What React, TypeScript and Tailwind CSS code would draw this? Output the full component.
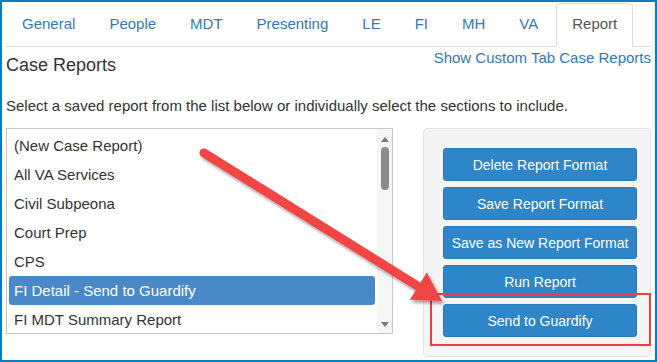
import { Fragment } from "react";

const tabs = ["General", "People", "MDT", "Presenting", "LE", "FI", "MH", "VA", "Report"];

const reports = [
  "(New Case Report)",
  "All VA Services",
  "Civil Subpeona",
  "Court Prep",
  "CPS",
  "FI Detail - Send to Guardify",
  "FI MDT Summary Report",
];

const actions = [
  "Delete Report Format",
  "Save Report Format",
  "Save as New Report Format",
  "Run Report",
  "Send to Guardify",
];

const App = () => {
  const active = "Report";
  const selected = "FI Detail - Send to Guardify";

  return (
    <div className="relative w-[657px] h-[362px] overflow-hidden border-2 border-[#0b7bc4] bg-white text-[#333] font-['Liberation_Sans',Arial,sans-serif]">
      <ul className="flex mx-[4px] pt-[1px] border-b border-[#ddd]">
        {tabs.map((t) => (
          <li key={t} className="-mb-px mr-[2px]">
            <a
              className={
                t === active
                  ? "block px-[15px] pt-[9px] pb-[11px] text-[15px] leading-[22px] rounded-t-[4px] border border-[#ddd] border-b-white bg-white text-[#555]"
                  : "block px-[15px] pt-[9px] pb-[11px] text-[15px] leading-[22px] rounded-t-[4px] border border-transparent text-[#337ab7]"
              }
            >
              {t}
            </a>
          </li>
        ))}
      </ul>

      <div className="flex justify-between items-start px-[4px]">
        <h1 className="mt-[6px] text-[18px] leading-[24px]">Case Reports</h1>
        <a className="mt-[1px] text-[15px] leading-[20px] text-[#337ab7]">Show Custom Tab Case Reports</a>
      </div>

      <p className="mt-[19px] px-[4px] text-[15px] leading-[20px]">
        Select a saved report from the list below or individually select the sections to include.
      </p>

      <div className="flex items-start mt-[12px] pl-[4px]">
        <div className="flex w-[387px] h-[206px] border border-[#c8c8c8] overflow-hidden">
          <div className="flex-1 p-[2px] flex flex-col">
            {reports.map((r) => (
              <div
                key={r}
                className={
                  r === selected
                    ? "shrink-0 h-[29px] pl-[5px] leading-[29px] text-[15px] rounded-[3px] bg-[#4a89c8] text-white"
                    : "shrink-0 h-[29px] pl-[5px] leading-[29px] text-[15px]"
                }
              >
                {r}
              </div>
            ))}
          </div>
          <div className="w-[15px] flex flex-col items-center pt-[8px] pb-[6px] bg-[#f6f6f6]">
            <svg width="8" height="5" viewBox="0 0 8 5">
              <polygon points="4,0 8,5 0,5" fill="#7a7a7a" />
            </svg>
            <div className="mt-[5px] w-[8px] h-[43px] rounded-full bg-[#8c8c8c]" />
            <div className="flex-1" />
            <svg width="8" height="5" viewBox="0 0 8 5">
              <polygon points="0,0 8,0 4,5" fill="#7a7a7a" />
            </svg>
          </div>
        </div>

        <div className="ml-[30px] w-[228px] h-[229px] rounded-[4px] border border-[#e3e3e3] bg-[#f5f5f5] pt-[19px] pl-[19px] flex flex-col gap-[6px]">
          {actions.map((a) => (
            <Fragment key={a}>
              <button className="w-[194px] h-[33px] rounded-[3px] border border-[#2b7bbb] bg-[#2e85c8] text-white text-[14px] leading-[20px] whitespace-nowrap">
                {a}
              </button>
            </Fragment>
          ))}
        </div>
      </div>

      {/* annotation: highlight box + arrow */}
      <div className="absolute left-[428px] top-[291px] w-[221px] h-[53px] border-2 border-[#ef3e3e]" />
      <svg className="absolute left-[-2px] top-[-2px] pointer-events-none" width="657" height="362" viewBox="0 0 657 362">
        <defs>
          <filter id="shadow" x="-10%" y="-10%" width="130%" height="130%">
            <feDropShadow dx="2" dy="3" stdDeviation="1.5" floodColor="#000" floodOpacity="0.35" />
          </filter>
        </defs>
        <g filter="url(#shadow)">
          <line x1="204" y1="153" x2="420" y2="287.5" stroke="#f24444" strokeWidth="9" strokeLinecap="round" />
          <polygon points="442,301 426.8,272.6 409.8,299.8" fill="#f24444" />
        </g>
      </svg>
    </div>
  );
};

export default App;
